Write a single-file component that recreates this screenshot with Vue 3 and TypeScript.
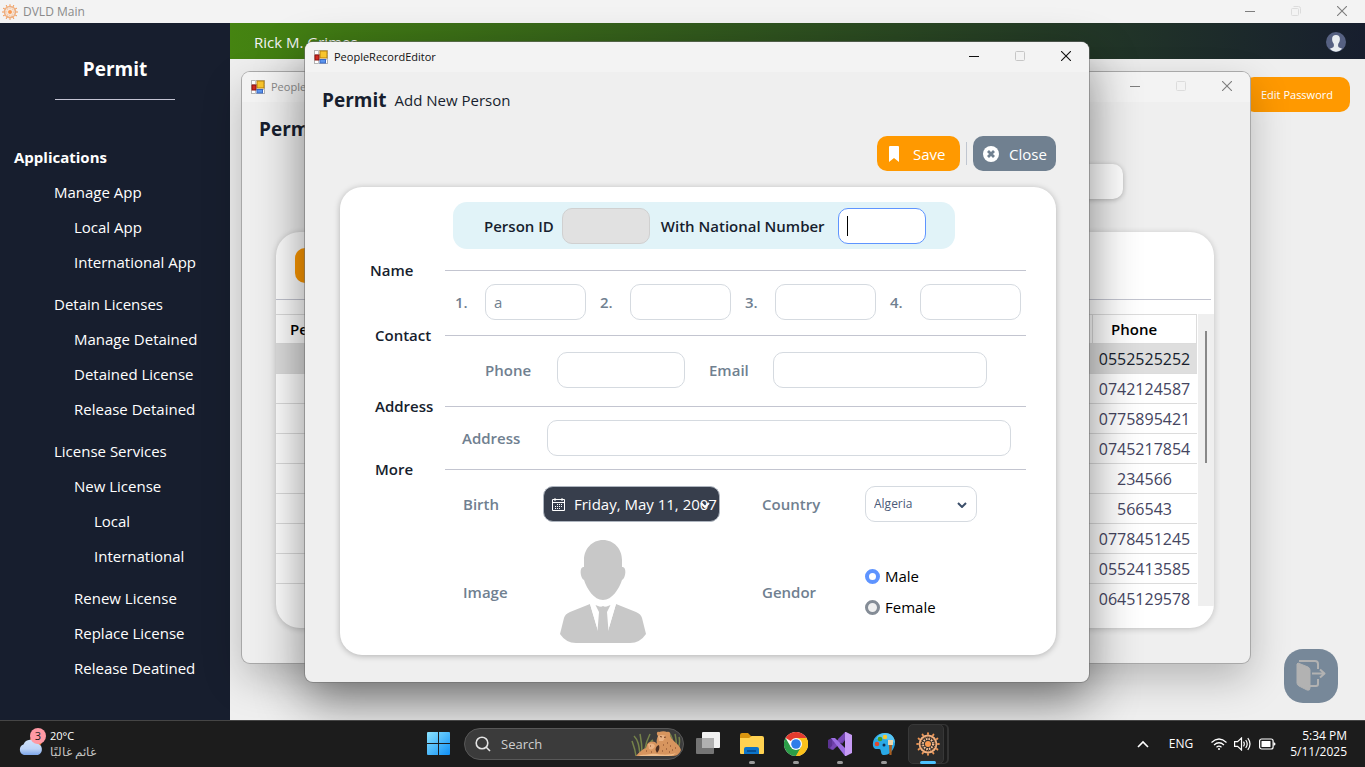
<script setup lang="ts">
import { ref } from 'vue'

interface NavItem { label: string; level: number; gap?: boolean }

const nav: NavItem[] = [
  { label: 'Applications', level: 0 },
  { label: 'Manage App', level: 1 },
  { label: 'Local App', level: 2 },
  { label: 'International App', level: 2 },
  { label: 'Detain Licenses', level: 1, gap: true },
  { label: 'Manage Detained', level: 2 },
  { label: 'Detained License', level: 2 },
  { label: 'Release Detained', level: 2 },
  { label: 'License Services', level: 1, gap: true },
  { label: 'New License', level: 2 },
  { label: 'Local', level: 3 },
  { label: 'International', level: 3 },
  { label: 'Renew License', level: 2, gap: true },
  { label: 'Replace License', level: 2 },
  { label: 'Release Deatined', level: 2 },
]

const phones: string[] = [
  '0552525252', '0742124587', '0775895421', '0745217854', '234566',
  '566543', '0778451245', '0552413585', '0645129578',
]

const names = ref<string[]>(['a', '', '', ''])
const nationalNo = ref('')
const phone = ref('')
const email = ref('')
const address = ref('')
const country = ref('Algeria')
const gender = ref('Male')
const spokes = [0, 30, 60, 90, 120, 150, 180, 210, 240, 270, 300, 330]
</script>

<template>
  <div class="screen">
    <svg class="defs" aria-hidden="true">
      <symbol id="g-min" viewBox="0 0 10 10"><path d="M0 5.5h10" stroke="currentColor" fill="none" /></symbol>
      <symbol id="g-max" viewBox="0 0 10 10"><rect x=".5" y=".5" width="9" height="9" rx="1" stroke="currentColor" fill="none" /></symbol>
      <symbol id="g-restore" viewBox="0 0 10 10"><rect x=".5" y="2.5" width="7" height="7" rx="1" stroke="currentColor" fill="none" /><path d="M2.5.5h5a2 2 0 0 1 2 2v5" stroke="currentColor" fill="none" /></symbol>
      <symbol id="g-close" viewBox="0 0 10 10"><path d="M0 0l10 10M10 0L0 10" stroke="currentColor" fill="none" stroke-width="1.1" /></symbol>
      <symbol id="g-form" viewBox="0 0 14 14">
        <rect x=".5" y=".5" width="13" height="13" fill="#fff" stroke="#b4b4b4" />
        <path d="M4.500 0v14M0 4.500h14M0 9.500h14" stroke="#c4c4c4" />
        <rect x="6" y="1" width="7" height="7" fill="#f8c52c" stroke="#b98208" />
        <rect x="1" y="5" width="4" height="5" fill="#d02b22" stroke="#8e1511" />
        <rect x="6" y="9.500" width="5.500" height="3.500" fill="#5b95ee" stroke="#3a68c4" />
      </symbol>
      <symbol id="g-sun" viewBox="0 0 24 24">
        <circle cx="12" cy="12" r="3" fill="#fb9a50" />
        <circle cx="12" cy="12" r="5" fill="none" stroke="#fdc59b" stroke-width="2" stroke-dasharray="1.600 1" />
        <circle cx="12" cy="12" r="8.500" fill="none" stroke="#f0b080" stroke-width="1.800" />
        <circle cx="12" cy="12" r="7" fill="none" stroke="#d98a50" stroke-width="1" stroke-dasharray="1 1" />
        <g v-for="a in spokes" :key="a" :transform="`rotate(${a} 12 12)`">
          <path d="M12 4V1.500" stroke="#f0a873" stroke-width="1.200" />
          <circle cx="12" cy="1.200" r="1" fill="#f3954f" />
        </g>
      </symbol>
    </svg>

    <header class="titlebar main-title">
      <svg class="app-icon"><use href="#g-sun" /></svg>
      <span class="title-text">DVLD Main</span>
      <div class="controls">
        <button aria-label="Minimize"><svg><use href="#g-min" /></svg></button>
        <button aria-label="Restore" class="off"><svg><use href="#g-restore" /></svg></button>
        <button aria-label="Close"><svg><use href="#g-close" /></svg></button>
      </div>
    </header>

    <div class="workspace">
      <nav class="sidebar">
        <h1 class="brand">Permit</h1>
        <ul>
          <li v-for="n in nav" :key="n.label" :class="['lv' + n.level, { gap: n.gap }]">
            <a href="#">{{ n.label }}</a>
          </li>
        </ul>
      </nav>
      <main class="main">
        <div class="userbar">
          <span>Rick M. Grimes</span>
          <svg class="user-icon" viewBox="0 0 20 20">
            <circle cx="10" cy="10" r="10" fill="#566182" />
            <path d="M10 3c2.600 0 3.900 1.500 3.900 3.900 0 2-.7 3.700-1.600 4.800-.5 1.500-.2 3.300.8 3.900l3.100 1.200A9.600 9.600 0 0 1 10 19.800a9.600 9.600 0 0 1-6.200-3l3.100-1.200c1-.6 1.300-2.400.8-3.900C6.800 10.600 6.100 8.900 6.100 6.900 6.100 4.500 7.400 3 10 3z" fill="#e8edf0" />
          </svg>
        </div>
        <div class="main-body">
          <button class="edit-password">Edit Password</button>
          <button class="exit" aria-label="Exit">
            <svg viewBox="0 0 30 34" fill="none" stroke="#b2b2b2" stroke-width="2" stroke-linejoin="round">
              <path d="M2 4L12 8q2 1 2 3v18q0 3-3 2L3 27q-2-1-2-3V5z" fill="#b2b2b2" stroke-width="1" />
              <path d="M3 2h16q3 0 3 3v5M14 27h6q2 0 2-2v-5" />
              <path d="M16 14.500h12M24 10.500l4.500 4-4.500 4" />
            </svg>
          </button>
        </div>
      </main>
    </div>

    <section class="window people" aria-label="People">
      <header class="titlebar">
        <svg class="form-icon"><use href="#g-form" /></svg>
        <span class="title-text">People</span>
        <div class="controls">
          <button aria-label="Minimize"><svg><use href="#g-min" /></svg></button>
          <button aria-label="Maximize" class="off"><svg><use href="#g-max" /></svg></button>
          <button aria-label="Close"><svg><use href="#g-close" /></svg></button>
        </div>
      </header>
      <div class="people-body">
        <h2 class="brand-dark">Permit</h2>
        <input class="filter" type="text" aria-label="Filter" />
        <div class="list-card">
          <div class="list-tools"><button class="add" aria-label="Add"></button></div>
          <div class="list-view">
            <table>
              <thead><tr><th class="first">Person ID</th><th class="phone">Phone</th></tr></thead>
              <tbody>
                <tr v-for="(p, i) in phones" :key="p" :class="{ sel: i === 0 }"><td></td><td>{{ p }}</td></tr>
              </tbody>
            </table>
            <div class="track"><div class="thumb"></div></div>
          </div>
        </div>
      </div>
    </section>

    <section class="window editor" aria-label="PeopleRecordEditor">
      <header class="titlebar">
        <svg class="form-icon"><use href="#g-form" /></svg>
        <span class="title-text">PeopleRecordEditor</span>
        <div class="controls">
          <button aria-label="Minimize"><svg><use href="#g-min" /></svg></button>
          <button aria-label="Maximize" class="off"><svg><use href="#g-max" /></svg></button>
          <button aria-label="Close"><svg><use href="#g-close" /></svg></button>
        </div>
      </header>
      <div class="editor-head">
        <h2 class="brand-dark">Permit</h2>
        <span>Add New Person</span>
      </div>
      <div class="actions">
        <button class="save">
          <svg viewBox="0 0 16 16"><path d="M3 0h8q1 0 1 1v15l-5-4-5 4V1q0-1 1-1z" fill="#fff" /></svg>
          Save
        </button>
        <i class="sep"></i>
        <button class="close">
          <svg viewBox="0 0 16 16"><circle cx="8" cy="8" r="8" fill="#fff" /><path d="M5 5l6 6M11 5l-6 6" stroke="#708090" stroke-width="2.800" /></svg>
          Close
        </button>
      </div>
      <form class="card" @submit.prevent>
        <div class="ident">
          <label for="pid">Person ID</label>
          <input id="pid" type="text" disabled />
          <label for="nat">With National Number</label>
          <span class="nat-box"><input id="nat" v-model="nationalNo" type="text" /><i class="caret"></i></span>
        </div>

        <h3 class="first-head">Name</h3>
        <div class="row names">
          <div v-for="(_, i) in names" :key="i" class="name-cell">
            <label :for="'n' + i">{{ i + 1 }}.</label>
            <input :id="'n' + i" v-model="names[i]" type="text" />
          </div>
        </div>

        <h3>Contact</h3>
        <div class="row contact">
          <label for="phone">Phone</label>
          <input id="phone" v-model="phone" type="text" />
          <label for="email">Email</label>
          <input id="email" v-model="email" type="text" />
        </div>

        <h3>Address</h3>
        <div class="row address">
          <label for="addr">Address</label>
          <input id="addr" v-model="address" type="text" />
        </div>

        <h3>More</h3>
        <div class="row more">
          <label for="birth">Birth</label>
          <span class="date">
            <svg viewBox="0 0 13 13" fill="none" stroke="#fff">
              <path d="M.5 1.500h12v11H.5zM.5 4.500h12M3 0v3M10 0v3" />
              <path d="M5 6.500h6M3 8.500h8M3 10.500h6" stroke-dasharray="1 1" />
            </svg>
            <input id="birth" type="text" value="Friday, May 11, 2007" readonly />
            <svg class="date-chev" viewBox="0 0 10 6"><path d="M1 1l4 4 4-4" fill="none" stroke="#fff" stroke-width="2" /></svg>
          </span>
          <label for="country">Country</label>
          <span class="select">
            <select id="country" v-model="country"><option>Algeria</option></select>
            <svg viewBox="0 0 10 6"><path d="M1 1l4 4 4-4" fill="none" stroke="#3c4f6a" stroke-width="2" /></svg>
          </span>
          <span class="lbl">Image</span>
          <svg class="portrait" viewBox="0 0 86 103" fill="#c8c8c8">
            <path d="M43 0C54 0 62 9 62 20v7c5-1 4 11 0 13-3 9-10 20-19 20S27 49 24 40c-4-2-5-14 0-13v-7C24 9 32 0 43 0z" />
            <path d="M30 64l8 27V66h10v25l8-27 20 8q5 2 6 6l4 16q-6 9-16 9H16Q6 103 0 94l4-16q1-4 6-6z" />
            <path d="M30 64h7l6 3 6-3h7l-8 27h-10z" fill="#fff" />
            <path d="M35.500 65q7.500 4 15 0L47 72l1.500 19-3 12h-5l-3-12L39 72z" />
          </svg>
          <span id="gender" class="lbl">Gendor</span>
          <div class="radios" role="radiogroup" aria-labelledby="gender">
            <label><input v-model="gender" type="radio" name="gender" value="Male" />Male</label>
            <label><input v-model="gender" type="radio" name="gender" value="Female" />Female</label>
          </div>
        </div>
      </form>
    </section>

    <footer class="taskbar">
      <div class="weather">
        <svg viewBox="0 0 28 30">
          <defs><linearGradient id="cl" x1="0" y1="0" x2="0" y2="1"><stop offset="0" stop-color="#cfe2fb" /><stop offset=".6" stop-color="#bcd3f6" /><stop offset="1" stop-color="#7ca6ea" /></linearGradient></defs>
          <circle cx="18" cy="12" r="6" fill="#f47a1c" />
          <path d="M6 26a5.500 5.500 0 0 1-.5-10.500A7.500 7.500 0 0 1 19 14.500a6 6 0 0 1 1 11.500z" fill="url(#cl)" />
          <circle cx="20" cy="8" r="8" fill="#ff99a4" transform="translate(0 -1)" />
          <text x="20" y="11" text-anchor="middle" font-size="11" fill="#1c1c1c">3</text>
        </svg>
        <div><div>20°C</div><div class="ar" dir="rtl" lang="ar">غائم غالبًا</div></div>
      </div>
      <div class="dock">
        <button class="start" aria-label="Start">
          <svg viewBox="0 0 24 24">
            <defs><linearGradient id="wg" x1="0" y1="0" x2="1" y2="1"><stop offset="0" stop-color="#8be3ff" /><stop offset="1" stop-color="#0f8ff5" /></linearGradient></defs>
            <path d="M0 1q0-1 1-1h10v11H0zM12 0h10q1 0 1 1v10H12zM0 12h11v11H1q-1 0-1-1zM12 12h11v10q0 1-1 1H12z" fill="url(#wg)" />
          </svg>
        </button>
        <label class="search">
          <svg class="glass" viewBox="0 0 16 16" fill="none" stroke="#e4e4e4" stroke-width="1.600"><circle cx="7" cy="7" r="5.800" /><path d="M11 11l4 4" /></svg>
          <input type="text" placeholder="Search" aria-label="Search" />
          <svg class="bears" viewBox="0 0 50 26">
            <path d="M5 25C4 17 2 13 1 10M9 24C8 14 7 9 3 5M11 22C11 12 10 8 9 3M14 18C15 11 17 7 19 3M17 17c1-4 3-7 5-8M42 15C42 8 41 5 38 2M45 18c1-7 0-10-1-15M47 18c2-5 2-8 1-12" fill="none" stroke="#75834a" stroke-width="1.500" />
            <path d="M5 25c3-4 7-7 10-8 1-4 2-6 5-6 2-1 5 0 6 2-1-3 0-6 1-8-2-2-1-5 1-4 3-1 6-1 8 0 2-1 4 1 3 3 1 6 9 8 11 15-2 5-5 6-9 6z" fill="#d7955e" />
            <path d="M7 24c10 0 14-2 19-1s15 1 19-1c-3 3-6 3-11 3H10z" fill="#efbe8c" />
            <path d="M25 20c-1-2 0-5 3-6 1 3 0 6-2 8z" fill="#4b2f22" />
            <path d="M17 13c3-1 6-1 7 2-1 3-4 4-6 3zM27 5q4-2 8 0l-3 5h-4z" fill="#eab283" />
            <path d="M29 5.500l2 .5M35 6l-2 .3M19 15h1M32 14h1M36 12h1M39 15h1M35 18h1M41 19h1M44 17h1M31 20h1M38 21h1M15 20h1M20 21h1" stroke="#7c4527" stroke-width="1.200" />
          </svg>
        </label>
        <button class="task" aria-label="Task view">
          <svg viewBox="0 0 24 24"><rect x="6" y="0" width="18" height="16" rx="1" fill="#f1f1f1" /><rect x="0" y="6" width="18" height="16" rx="1" fill="#747474" /><path d="M6 6h12v10H6z" fill="#b0b0b0" /></svg>
        </button>
        <button class="task run" aria-label="File Explorer">
          <svg viewBox="0 0 24 24"><path d="M0 3q0-2 2-2h6l3 3h11v8H0z" fill="#d9950f" /><path d="M0 6h9l3-2h10q2 0 2 2v15q0 1-1 1H1q-1 0-1-1z" fill="#ffd251" /><path d="M4 22v-5q0-2 2-2h11q2 0 2 2v5z" fill="#0c73c8" /><path d="M7 18h9v2H7z" fill="#074f94" /></svg>
        </button>
        <button class="task run" aria-label="Chrome">
          <svg viewBox="0 0 24 24"><circle cx="12" cy="12" r="12" fill="#fff" /><path d="M12 12L1.600 6A12 12 0 0 1 22.400 6z" fill="#e33b2e" /><path d="M12 12L22.400 6A12 12 0 0 1 12 24z" fill="#fcc21b" /><path d="M12 12l5.200 3L12 24A12 12 0 0 1 1.600 6l5.200 9z" fill="#2c9d48" /><path d="M12 6h10.400A12 12 0 0 1 12 24l5.200-9z" fill="#fcc21b" /><circle cx="12" cy="12" r="6" fill="#fff" /><circle cx="12" cy="12" r="4.800" fill="#2f7de9" /></svg>
        </button>
        <button class="task run" aria-label="Visual Studio">
          <svg viewBox="0 0 24 24"><path d="M0 8l4-2v12l-4-2z" fill="#5b3392" /><path d="M4 6l3 3v6l-3 3z" fill="#6b3fa6" /><path d="M10 7l8-7v7l-4 5z" fill="#6a3da8" /><path d="M2 16L17 0l2 5L5 18z" fill="#7848b5" /><path d="M3 6l4 0 12 12-2 6z" fill="#9d6fe2" /><path d="M17 0h1l6 3v18l-6 3h-1z" fill="#c79bf5" /></svg>
        </button>
        <button class="task run" aria-label="Paint">
          <svg viewBox="0 0 24 24"><path d="M13 1C5 1 0 7 1 14c1 4 4 3 6 3 3 0 1 5 4 6 6 1 11-5 12-11C23 5 19 1 13 1z" fill="#29a9e6" /><path d="M13 1c6 0 10 4 10 10-6-4-12-5-19-4 2-4 5-6 9-6z" fill="#56c5f4" /><circle cx="5" cy="12" r="2.300" fill="#e0482e" /><circle cx="8" cy="7" r="2.300" fill="#4a9e1d" /><circle cx="13" cy="5" r="2.200" fill="#f8c62c" /><circle cx="12" cy="13" r="1.500" fill="#102c50" /><path d="M16 8h5v5h-5z" fill="#ead7ae" /><path d="M17 13h3l-.5 10h-2z" fill="#a85d20" /></svg>
        </button>
        <button class="task run active" aria-label="DVLD"><svg><use href="#g-sun" /></svg></button>
      </div>
      <div class="tray">
        <svg class="up" viewBox="0 0 12 8"><path d="M1 7l5-5 5 5" fill="none" stroke="#fff" stroke-width="1.600" /></svg>
        <span class="lang">ENG</span>
        <svg class="wifi" viewBox="0 0 16 12" fill="none" stroke="#fff" stroke-width="1.200"><path d="M.5 4.500q7.500-7 15 0M3 7q5-4.500 10 0M5.500 9.300q2.500-2.200 5 0" /><circle cx="8" cy="11" r="1" fill="#fff" stroke="none" /></svg>
        <svg class="vol" viewBox="0 0 17 14" fill="none" stroke="#fff" stroke-width="1.200"><path d="M.6 4.600h3L7.500 1v12L3.600 9.400h-3zM9.500 4.700q1.600 2.300 0 4.600M11.700 3q3 4 0 8M13.800 1.200q4.400 5.800 0 11.600" /></svg>
        <svg class="bat" viewBox="0 0 17 12"><rect x=".6" y="1" width="13.500" height="10" rx="2" fill="none" stroke="#fff" stroke-width="1.200" /><rect x="2.500" y="3" width="9" height="6" rx=".5" fill="#fff" /><path d="M14.500 4.200q2 .3 2 1.800t-2 1.800z" fill="#fff" /></svg>
        <div class="clock"><div>5:34 PM</div><div>5/11/2025</div></div>
      </div>
    </footer>
  </div>
</template>

<style>
body { margin: 0; }
</style>

<style scoped>
.screen { position: relative; height: 100vh; display: grid; grid-template-rows: 23px 1fr 47px; overflow: hidden; font: 15px/20px "Open Sans", "Noto Sans", sans-serif; color: #171e2e; background: #efefef; }
.screen *, .screen *::before, .screen *::after { box-sizing: border-box; }
.defs { position: absolute; width: 0; height: 0; }
button, input, select { font: inherit; color: inherit; }
button { border: 0; padding: 0; background: none; }
h1, h2, h3, ul { margin: 0; padding: 0; list-style: none; }
svg { display: block; flex: none; }

.titlebar { display: flex; align-items: center; background: #f3f3f3; font-size: 12px; color: #8a8a8a; }
.title-text { flex: 1; }
.app-icon { width: 16px; height: 16px; margin: 0 5px 0 2px; }
.form-icon { width: 14px; height: 14px; margin: 0 6px 0 9px; }
.controls { display: flex; height: 100%; padding-bottom: 2px; }
.controls button { width: 46px; display: grid; place-items: center; color: #7d7d7d; }
.controls svg { width: 10px; height: 10px; }
.controls .off { color: #dcdcdc; }

.workspace { display: flex; min-height: 0; }
.sidebar { width: 230px; background: #171e2e; color: #fff; padding-top: 32px; }
.brand { width: 120px; margin: 0 auto 0 55px; height: 45px; border-bottom: 1px solid #c3c3d2; text-align: center; font-size: 19px; line-height: 28px; font-weight: 700; }
.sidebar ul { margin-top: 40px; }
.sidebar li { height: 35px; line-height: 35px; }
.sidebar a { color: inherit; text-decoration: none; }
.sidebar .gap { margin-top: 7px; }
.lv0 { padding-left: 14px; font-weight: 700; }
.lv1 { padding-left: 54px; }
.lv2 { padding-left: 74px; }
.lv3 { padding-left: 94px; }

.main { flex: 1; display: flex; flex-direction: column; }
.userbar { height: 36px; display: flex; align-items: center; justify-content: space-between; padding: 2px 19px 0 24px; color: #f4f4f4; background: linear-gradient(90deg, #458411, #171e2e); }
.user-icon { width: 20px; height: 20px; }
.main-body { flex: 1; display: flex; flex-direction: column; justify-content: space-between; align-items: flex-end; padding: 18px 15px 17px; }
.edit-password { width: 106px; height: 35px; border-radius: 10px; background: #ff9900; color: #fff; font-size: 11px; }
.exit { width: 54px; height: 54px; margin-right: 12px; border-radius: 19px; background: #778899; display: grid; place-items: center; }
.exit svg { width: 30px; height: 34px; }

.window { position: absolute; border-radius: 8px; background: #efefef; overflow: hidden; }
.window .titlebar { height: 30px; font-size: 11px; }
.brand-dark { font-size: 19px; line-height: 28px; font-weight: 700; }

.people { left: 242px; top: 72px; width: 1008px; box-shadow: 0 0 0 1px #a8a8a8, 0 16px 40px rgba(0, 0, 0, .24); }
.people-body { padding: 13px 36px 35px 34px; display: flex; flex-direction: column; }
.people-body .brand-dark { margin-left: -17px; }
.filter { align-self: flex-end; width: 220px; height: 35px; margin: 21px 91px 33px 0; border: 0; border-radius: 10px; background: #fff; box-shadow: 0 1px 5px rgba(0, 0, 0, .25); }
.list-card { border-radius: 24px; background: #fff; box-shadow: 0 1px 6px rgba(0, 0, 0, .2); padding-bottom: 14px; overflow: hidden; }
.list-tools { height: 68px; padding: 16px 19px; border-bottom: 1px solid #c3c5d0; margin-right: 3px; }
.add { width: 120px; height: 35px; border-radius: 10px; background: #ff9900; }
.list-view { display: flex; align-items: flex-start; height: 300px; margin-top: 14px; gap: 1px; }
table { flex: 1; border-collapse: collapse; table-layout: fixed; }
th { height: 29px; padding: 0; border: 1px solid #dcdcdc; font-weight: 600; text-align: left; color: #000; }
th.first { padding-left: 14px; border-left: 0; }
th.phone { width: 104px; padding-left: 18px; }
td { height: 30px; padding: 0; border-bottom: 1px solid #dcdcdc; text-align: center; color: #45455f; font-size: 16px; line-height: 20px; }
tr:last-child td { border-bottom: 0; }
.sel td { background: #dedede; color: #171e2e; }
.track { width: 16px; height: 292px; background: #efefef; padding-top: 17px; }
.thumb { width: 2px; height: 132px; margin-left: 7px; background: #888; }

.editor { left: 305px; top: 42px; width: 784px; padding-bottom: 27px; box-shadow: 0 0 0 1px rgba(110, 110, 110, .55), 0 20px 50px rgba(0, 0, 0, .48); }
.editor .titlebar { color: #111; }
.editor .controls button { color: #111; }
.editor .controls .off { color: #c6c6c6; }
.editor-head { display: flex; align-items: center; gap: 8px; padding: 13px 17px 0; height: 43px; }
.actions { display: flex; justify-content: flex-end; align-items: center; gap: 6px; margin: 21px 33px 0; }
.actions button { width: 83px; height: 35px; border-radius: 10px; color: #fff; display: flex; align-items: center; gap: 10px; padding-left: 10px; }
.actions svg { width: 16px; height: 16px; }
.save { background: #ff9900; }
.actions .close { background: #708090; }
.sep { width: 1px; height: 23px; background: #c0c6d0; }

.card { margin: 16px 33px 0 35px; padding: 15px 30px 12px; border-radius: 22px; background: #fff; box-shadow: 0 1px 6px rgba(0, 0, 0, .26); }
.card input[type="text"], select { height: 36px; width: 100%; min-width: 0; border: 1px solid #d5dae0; border-radius: 10px; background: #fff; padding: 0 8px; color: #708090; outline: 0; }
.card label, .lbl { font-weight: 600; color: #708090; }
.ident { display: flex; align-items: center; width: 502px; height: 47px; margin: 0 0 10px 83px; padding-left: 31px; border-radius: 14px; background: #e1f3f8; }
.ident label { color: #171e2e; white-space: nowrap; }
.card .ident input { width: 88px; }
.card #pid { background: #e1e1e1; border-color: #d0d0d0; margin: 0 11px 0 8px; }
.card #nat { border-color: #5e94ff; }
.nat-box { position: relative; display: block; margin-left: 13px; }
.caret { position: absolute; left: 9px; top: 8px; width: 1px; height: 20px; background: #000; }
h3 { display: grid; grid-template-columns: 70px 1fr; align-items: center; height: 22px; padding-left: 5px; font-size: 15px; font-weight: 600; white-space: nowrap; }
h3.first-head { grid-template-columns: 75px 1fr; padding-left: 0; }
h3::after { content: ""; height: 1px; background: #c3c5d0; }
.row { align-items: center; }
.names { display: flex; gap: 14px; padding: 3px 5px 4px 85px; }
.name-cell { flex: 1; display: grid; grid-template-columns: 30px 1fr; align-items: center; }
.contact { display: grid; grid-template-columns: 72px 128px 88px 1fr; padding: 6px 39px 7px 115px; }
.contact label:nth-of-type(2) { padding-left: 24px; }
.address { display: grid; grid-template-columns: 85px 1fr; padding: 3px 15px 2px 92px; }
.more { display: grid; grid-template-columns: 80px 177px 145px 112px; padding: 6px 0 0 93px; row-gap: 18px; }
.more > :nth-child(4n + 3) { padding-left: 42px; }
.date { display: flex; align-items: center; height: 36px; padding-left: 8px; gap: 9px; border: 1px solid #aeb5bf; border-radius: 10px; background: #373e4c; overflow: hidden; position: relative; }
.date svg { width: 13px; height: 13px; }
.card .date input { border: 0; background: transparent; color: #fff; padding: 0; border-radius: 0; }
.date .date-chev { position: absolute; right: 9px; top: 15px; width: 10px; height: 6px; }
.select { position: relative; display: block; }
select { appearance: none; font-size: 12px; color: #4a5a78; display: block; }
.select svg { position: absolute; right: 10px; top: 16px; width: 10px; height: 6px; }
.portrait { width: 86px; height: 103px; margin-left: 17px; }
.radios { display: grid; gap: 11px; }
.card .radios label { display: flex; align-items: center; gap: 5px; font-weight: 400; color: #000; }
.radios input { appearance: none; width: 15px; height: 15px; margin: 0; border: 3px solid #848c96; border-radius: 50%; background: #efefef; }
.radios input:checked { border: 4px solid #5e94ff; background: #fff; }

.taskbar { display: grid; grid-template-columns: 1fr auto 1fr; align-items: center; padding-left: 12px; background: #1c1c1c; border-top: 1px solid #454545; color: #fff; font-size: 12px; line-height: 16px; position: relative; }
.weather { display: flex; align-items: center; gap: 4px; padding-left: 6px; font-size: 11px; }
.weather svg { width: 28px; height: 30px; overflow: visible; }
.ar { color: #c4c4c4; font-size: 12px; }
.dock { display: flex; align-items: center; }
.start { margin-right: 13px; }
.start svg, .task svg { width: 24px; height: 24px; }
.search { display: flex; align-items: center; width: 220px; height: 32px; margin-right: 2px; padding: 0 2px 0 10px; border: 1px solid #585858; border-radius: 16px; background: #3b3b3b; }
.search input { flex: 1; min-width: 0; border: 0; padding: 0 0 0 10px; background: none; font-size: 13px; outline: 0; }
.search input::placeholder { color: #cfcfcf; opacity: 1; }
.glass { width: 16px; height: 16px; }
.bears { width: 50px; height: 26px; }
.task { position: relative; width: 44px; height: 46px; display: grid; place-items: center; }
.task svg { position: relative; }
.run::after { content: ""; position: absolute; bottom: 3px; left: 19px; width: 6px; height: 3px; border-radius: 2px; background: #9a9a9a; }
.active::before { content: ""; position: absolute; left: 2px; top: 3px; width: 36px; height: 40px; border: 1px solid #383838; border-radius: 5px; background: #2b2b2b; box-shadow: 4px 0 0 -1px #1c1c1c, 5px 0 0 0 #333; }
.active::after { left: 14px; width: 16px; background: #4cc2ff; }
.tray { display: flex; align-items: center; justify-content: flex-end; padding-right: 18px; }
.up { width: 12px; height: 8px; margin-right: 20px; }
.lang { margin-right: 18px; }
.wifi { width: 16px; height: 12px; margin-right: 7px; }
.vol { width: 17px; height: 14px; margin-right: 8px; }
.bat { width: 17px; height: 12px; margin-right: 14px; }
.clock { text-align: right; font-size: 12px; }
</style>
